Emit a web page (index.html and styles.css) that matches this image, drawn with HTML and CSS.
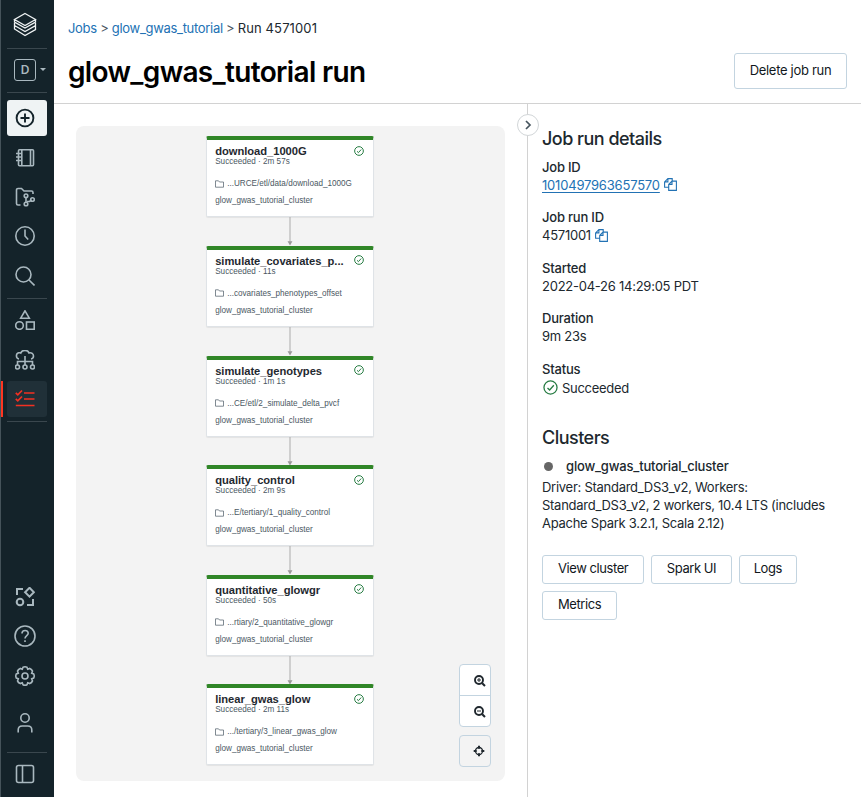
FILE: index.html
```html
<!DOCTYPE html>
<html lang="en">
<head>
<meta charset="utf-8">
<title>glow_gwas_tutorial run</title>
<link rel="stylesheet" href="styles.css">
</head>
<body>
<svg class="defs" width="0" height="0">
  <symbol id="check" viewBox="0 0 14 14"><circle cx="7" cy="7" r="6.1"/><path d="M4.2 7.4l2 1.9 3.9-4.4"/></symbol>
  <symbol id="folder" viewBox="0 0 9 8"><path d="M.5 7.2V.8h3l1 1.2h4v5.2z"/></symbol>
  <symbol id="arrow" viewBox="0 0 8 29"><path d="M4 0v25" stroke="#aaa" fill="none"/><path d="M1.5 24.5h5L4 29z" fill="#999"/></symbol>
  <symbol id="copy" viewBox="0 0 13 13"><path d="M8.2 3.1V.6H3.9L.6 3.9v5.400h4M3.900.6v3.300H.6M4.700 6.400L8 3.100h4.400v9.300H4.700zM8 3.100v3.300H4.700"/></symbol>
</svg>
<div class="app">
  <nav class="sidebar">
    <div class="cell logo"><svg width="24" height="26" viewBox="0 0 24 26"><path d="M12 1.5l10.5 6L12 13.5 1.5 7.500zM1.500 7.500V10L12 16l10.500-6V7.500M1.500 13.500L12 19.500l10.500-6V11M1.500 11v6L12 23.500l10.500-6V13.500" /></svg></div>
    <hr>
    <div class="cell workspace"><span class="initial">D</span><i class="caret"></i></div>
    <hr>
    <div class="cell create"><svg width="20" height="20" viewBox="0 0 20 20"><circle cx="10" cy="10" r="8.400"/><path d="M10 5.500v9M5.500 10h9"/></svg></div>
    <div class="cell"><svg width="20" height="20" viewBox="0 0 20 20"><rect x="3.500" y="1.800" width="15" height="16" rx="1"/><path d="M6.800 2v16M15.500 2v16M1 5.500h5M1 9h5M1 12.500h5"/></svg></div>
    <div class="cell"><svg width="20" height="20" viewBox="0 0 20 20"><path d="M5.500 18H3a1.500 1.500 0 0 1-1.500-1.500V3A1.500 1.500 0 0 1 3 1.500h3.500L9 4h7.500A1.500 1.500 0 0 1 18 5.500V7M11 10v5.500M12 14.500h2.500L16.500 13"/><circle cx="11" cy="8.800" r="1.800"/><circle cx="11" cy="17" r="1.800"/><circle cx="17.500" cy="12.500" r="1.800"/></svg></div>
    <div class="cell"><svg width="20" height="20" viewBox="0 0 20 20"><circle cx="10" cy="10" r="9.200"/><path d="M10 3.500V10l3.200 3.500"/></svg></div>
    <div class="cell"><svg width="20" height="20" viewBox="0 0 20 20"><circle cx="8.500" cy="8.500" r="7.500"/><path d="M14 14l5.500 5.500"/></svg></div>
    <hr class="mid">
    <div class="cell"><svg width="20" height="20" viewBox="0 0 20 20"><path d="M10 .8L14.300 8.200H5.700z"/><circle cx="4.500" cy="15.500" r="3.800"/><rect x="11.500" y="12" width="7.700" height="7.300"/></svg></div>
    <div class="cell"><svg width="20" height="20" viewBox="0 0 20 20"><path d="M4 9a3.200 3.200 0 0 1-.3-6.200C5 2.500 5.500 2.800 5.800 3 7-.5 13-.5 14 3c2.500-.7 4.500.8 4.500 3A3 3 0 0 1 16 9M10 6v9M2.500 15v-3.500h15V15"/><circle cx="2.500" cy="17" r="2"/><circle cx="10" cy="17" r="2"/><circle cx="17.500" cy="17" r="2"/></svg></div>
    <div class="cell active"><svg width="20" height="20" viewBox="0 0 20 20"><path d="M9 4h10.500M9 10h10.500M.8 16.500h18.700M.8 3.800l2 2L7 1.500M.8 9.800l2 2L7 7.500"/></svg></div>
    <hr class="last">
    <div class="bottom">
      <div class="cell"><svg class="bold" width="20" height="20" viewBox="0 0 20 20"><path d="M2 8V2h6M18 12v6h-6M14.500.8l4.400 4.400-4.400 4.400-4.400-4.400z"/><circle cx="5" cy="15" r="3.300"/></svg></div>
      <div class="cell"><svg width="22" height="22" viewBox="0 0 22 22"><circle cx="11" cy="11" r="10"/><path d="M8 8.500C8 4.500 14.200 4.500 14.200 8.300c0 2.400-3.200 2.200-3.200 5.200M11 15.300v1.700"/></svg></div>
      <div class="cell"><svg width="20" height="20" viewBox="0 0 20 20"><path d="M8 1.300q2-1 4 0l.7 1.900 2.100-.8q2 .8 2.700 2.700l-.8 2.100 2 .8q1 2 0 4l-2 .8.800 2.100q-.7 1.900-2.700 2.700l-2.100-.8-.7 1.900q-2 1-4 0l-.7-1.900-2.100.8q-2-.8-2.700-2.700l.8-2.100-2-.8q-1-2 0-4l2-.8-.8-2.100q.7-1.900 2.700-2.700l2.100.8z"/><circle cx="10" cy="10" r="3"/></svg></div>
      <div class="cell user"><svg width="20" height="22" viewBox="0 0 20 22"><circle cx="10" cy="6" r="4.200"/><path d="M3.200 20.500v-2.500q0-4 4-4h5.600q4 0 4 4v2.500"/></svg></div>
      <hr>
      <div class="cell toggle"><svg width="20" height="20" viewBox="0 0 20 20"><rect x="1.500" y="1.500" width="17" height="17" rx="2"/><path d="M7.500 1.500v17"/></svg></div>
    </div>
  </nav>

  <main class="main">
    <header class="header">
      <div class="crumbs"><a>Jobs</a> &gt; <a>glow_gwas_tutorial</a> &gt; <span>Run 4571001</span></div>
      <div class="headline"><h1>glow_gwas_tutorial run</h1><button class="btn delete">Delete job run</button></div>
    </header>

    <div class="content">
      <section class="graph-area">
        <div class="graph">
          <div class="node"><div class="node-head"><b>download_1000G</b><svg class="ok"><use href="#check"/></svg></div><p class="time">Succeeded · 2m 57s</p><p class="path"><svg><use href="#folder"/></svg>...URCE/etl/data/download_1000G</p><p>glow_gwas_tutorial_cluster</p></div>
          <svg class="arrow"><use href="#arrow"/></svg>
          <div class="node"><div class="node-head"><b>simulate_covariates_p...</b><svg class="ok"><use href="#check"/></svg></div><p class="time">Succeeded · 11s</p><p class="path"><svg><use href="#folder"/></svg>...covariates_phenotypes_offset</p><p>glow_gwas_tutorial_cluster</p></div>
          <svg class="arrow"><use href="#arrow"/></svg>
          <div class="node"><div class="node-head"><b>simulate_genotypes</b><svg class="ok"><use href="#check"/></svg></div><p class="time">Succeeded · 1m 1s</p><p class="path"><svg><use href="#folder"/></svg>...CE/etl/2_simulate_delta_pvcf</p><p>glow_gwas_tutorial_cluster</p></div>
          <svg class="arrow"><use href="#arrow"/></svg>
          <div class="node"><div class="node-head"><b>quality_control</b><svg class="ok"><use href="#check"/></svg></div><p class="time">Succeeded · 2m 9s</p><p class="path"><svg><use href="#folder"/></svg>...E/tertiary/1_quality_control</p><p>glow_gwas_tutorial_cluster</p></div>
          <svg class="arrow"><use href="#arrow"/></svg>
          <div class="node"><div class="node-head"><b>quantitative_glowgr</b><svg class="ok"><use href="#check"/></svg></div><p class="time">Succeeded · 50s</p><p class="path"><svg><use href="#folder"/></svg>...rtiary/2_quantitative_glowgr</p><p>glow_gwas_tutorial_cluster</p></div>
          <svg class="arrow"><use href="#arrow"/></svg>
          <div class="node"><div class="node-head"><b>linear_gwas_glow</b><svg class="ok"><use href="#check"/></svg></div><p class="time">Succeeded · 2m 11s</p><p class="path"><svg><use href="#folder"/></svg>.../tertiary/3_linear_gwas_glow</p><p>glow_gwas_tutorial_cluster</p></div>
          <div class="controls">
            <div class="zoom">
              <button><svg width="12" height="12" viewBox="0 0 12 12"><circle cx="5" cy="5" r="4" stroke-width="1.900"/><path d="M8.200 8.200L11 11" stroke-width="2"/><path d="M5 3v4M3 5h4" stroke-width="1"/></svg></button>
              <button><svg width="12" height="12" viewBox="0 0 12 12"><circle cx="5" cy="5" r="4" stroke-width="1.900"/><path d="M8.200 8.200L11 11" stroke-width="2"/><path d="M3 5h4" stroke-width="1"/></svg></button>
            </div>
            <button class="center"><svg width="12" height="12" viewBox="0 0 12 12"><circle cx="6" cy="6" r="3.500" stroke-width="1.300"/><path d="M6 .7v3M6 8.300v3M.7 6h3M8.300 6h3" stroke-width="2"/></svg></button>
          </div>
        </div>
      </section>

      <aside class="details">
        <button class="collapse"><svg width="8" height="10" viewBox="0 0 8 10"><path d="M2 1l4 4-4 4"/></svg></button>
        <h2>Job run details</h2>
        <dl>
          <div><dt>Job ID</dt><dd><a class="jobid">1010497963657570</a><svg class="copy"><use href="#copy"/></svg></dd></div>
          <div><dt>Job run ID</dt><dd>4571001<svg class="copy"><use href="#copy"/></svg></dd></div>
          <div><dt>Started</dt><dd>2022-04-26 14:29:05 PDT</dd></div>
          <div><dt>Duration</dt><dd>9m 23s</dd></div>
          <div><dt>Status</dt><dd class="status"><svg class="ok"><use href="#check"/></svg>Succeeded</dd></div>
        </dl>
        <h2 class="clusters">Clusters</h2>
        <div class="cluster"><i></i>glow_gwas_tutorial_cluster</div>
        <p class="spec">Driver: Standard_DS3_v2, Workers:<br>Standard_DS3_v2, 2 workers, 10.4 LTS (includes<br>Apache Spark 3.2.1, Scala 2.12)</p>
        <div class="actions"><button class="btn">View cluster</button><button class="btn">Spark UI</button><button class="btn">Logs</button><button class="btn">Metrics</button></div>
      </aside>
    </div>
  </main>
</div>
</body>
</html>
```
FILE: styles.css
```css
* { box-sizing: border-box; }
body { margin: 0; background: #fff; color: #20282e; font: 13px/18px Inter, sans-serif; }
h1, h2, p, dl, dd { margin: 0; }
button { font: inherit; color: inherit; padding: 0; }
svg { display: block; flex: none; fill: none; }
.defs { position: absolute; }
.app { display: flex; height: 797px; overflow: hidden; }

.sidebar { width: 54px; flex: none; background: #14232a; border-left: 1px solid #45535a; display: flex; flex-direction: column; padding: 2px 7px 0 6px; }
.sidebar hr { width: 40px; height: 1px; margin: 0; border: 0; background: #3a474e; flex: none; }
.cell { height: 39.400px; display: flex; align-items: center; justify-content: center; width: 36px; flex: none; }
.cell svg { stroke: #a9b8bf; stroke-width: 1.600; }
.cell svg.bold { stroke-width: 2; }
.logo { height: 46px; }
.logo svg { stroke: #eef2f3; stroke-width: 1.300; }
.workspace { height: 43px; width: 40px; justify-content: flex-start; padding: 0 0 2px 7px; gap: 4px; }
.initial { width: 22px; height: 22px; border: 1px solid #a9b8bf; border-radius: 3px; text-align: center; line-height: 20px; font-size: 12px; font-weight: 600; color: #a9b8bf; }
.caret { border: 3px solid transparent; border-top: 3px solid #a9b8bf; border-bottom: 0; }
.create { width: 40px; height: 36px; margin: 7px 0 2px; background: #eff3f4; border-radius: 3px; padding-right: 4px; }
.create svg { stroke: #14232a; stroke-width: 1.900; }
.mid { margin-top: 2px !important; margin-bottom: 2px !important; }
.active { width: 46px; height: 36px; margin: 2px 0 0 -6px; background: linear-gradient(90deg, #ff3621 2px, transparent 2px); position: relative; }
.active::before { content: ""; position: absolute; left: 6px; top: 0; width: 40px; height: 36px; background: #203038; border-radius: 3px; }
.active svg { position: relative; stroke: #f23022; stroke-width: 1.700; margin-left: 2px; }
.last { margin-top: 4px !important; }
.bottom { margin-top: auto; }
.bottom .cell { padding-bottom: 3px; }
.bottom .user { height: 55px; }
.bottom .toggle { height: 44px; padding-bottom: 2px; }

.main { flex: 1; min-width: 0; display: flex; flex-direction: column; }
.header { height: 104px; border-bottom: 1px solid #d2d2d2; padding: 19px 14px 0; }
.crumbs { color: #4a565e; letter-spacing: -.31px; }
.crumbs span { color: #20282e; letter-spacing: .12px; }
a { color: #2272b4; }
.headline { display: flex; justify-content: space-between; align-items: flex-start; padding-top: 16px; }
h1 { color: #000; font-size: 28px; line-height: 38px; font-weight: 600; letter-spacing: -.66px; }
.btn { height: 29px; border: 1px solid #c3d4e0; border-radius: 3px; background: #fff; padding: 0 15px 3px; color: #11171c; font-size: 13px; letter-spacing: -.43px; }
.btn:nth-child(2) { padding-left: 14.500px; padding-right: 14.500px; }
.btn:nth-child(3) { padding-left: 14px; padding-right: 14px; }
.headline .delete { height: 36px; width: 113px; padding: 0 0 2px; letter-spacing: -.3px; }
.content { flex: 1; display: flex; min-height: 0; }
.graph-area { width: 473px; padding: 22px 22px 16px; }
.graph { height: 655px; border-radius: 8px; background: #f3f3f3; padding: 10.400px 0 0 129.700px; position: relative; }
.node { width: 168px; height: 81px; background: #fff; border: 1px solid #dfe3e7; border-top: 4px solid #308627; border-radius: 2px; padding: 5px 9px 0 8.500px; color: #4b5863; font: 8.150px/11px "Liberation Sans", sans-serif; box-shadow: 0 1px 1px #0001; }
.node-head { display: flex; justify-content: space-between; height: 12px; }
.node-head b { font-size: 11.200px; line-height: 12px; letter-spacing: -.04px; color: #1f2930; white-space: nowrap; }
.node .ok { width: 10px; height: 10px; margin-top: .5px; }
.ok { stroke: #277c43; stroke-width: 1.400; }
.node .time { height: 10px; line-height: 10px; margin-bottom: 11px; }
.path { display: flex; align-items: center; gap: 3px; margin-bottom: 6px; white-space: nowrap; }
.path svg { width: 9px; height: 8px; stroke: #5f6c76; stroke-width: .8; }
.arrow { width: 8px; height: 28.600px; margin-left: 80px; }
.controls { position: absolute; right: 14px; bottom: 14px; width: 32px; }
.controls button { display: flex; width: 100%; height: 30px; align-items: center; justify-content: flex-end; padding-right: 4px; border: 0; background: transparent; }
.controls svg { stroke: #1f272d; }
.zoom { border: 1px solid #c3d4e0; border-radius: 4px; background: #fff; height: 63px; margin-bottom: 8px; }
.zoom button:first-child { padding-top: 2px; }
.zoom button + button { border-top: 1px solid #c3d4e0; height: 31px; padding-top: 1px; }
.controls .center { border: 1px solid #c3d4e0; border-radius: 4px; height: 32px; padding-right: 5px; }

.details { flex: 1; border-left: 1px solid #d2d2d2; padding: 23px 14px 0; position: relative; letter-spacing: -.25px; }
.collapse { position: absolute; left: -11px; top: 10px; width: 22px; height: 22px; border: 1px solid #d2d6d8; border-radius: 50%; background: #fff; display: flex; align-items: center; justify-content: center; }
.collapse svg { stroke: #46545d; stroke-width: 1.700; }
h2 { font-size: 18px; line-height: 24px; font-weight: 550; letter-spacing: -.52px; }
dl { margin-top: 6.500px; display: flex; flex-direction: column; gap: 14.500px; }
dt { font-weight: 550; letter-spacing: -.2px; }
dd { display: flex; align-items: center; gap: 4px; }
.jobid { text-decoration: underline; text-underline-offset: 2px; letter-spacing: -.2px; }
.copy { width: 13px; height: 13px; stroke: #2272b4; stroke-width: 1.100; }
.status { margin-top: 1px; letter-spacing: -.3px; }
.status .ok { width: 15px; height: 15px; margin-left: 1px; stroke-width: 1.200; }
.clusters { margin-top: 29.500px; }
.cluster { display: flex; align-items: center; font-weight: 550; letter-spacing: -.18px; margin-top: 7px; }
.cluster i { width: 9px; height: 9px; border-radius: 50%; background: #666; margin: 0 13px 0 2px; }
.spec { margin-top: 3px; white-space: nowrap; letter-spacing: -.27px; }
.actions { display: flex; flex-wrap: wrap; gap: 7px; margin-top: 23px; width: 270px; }
```
